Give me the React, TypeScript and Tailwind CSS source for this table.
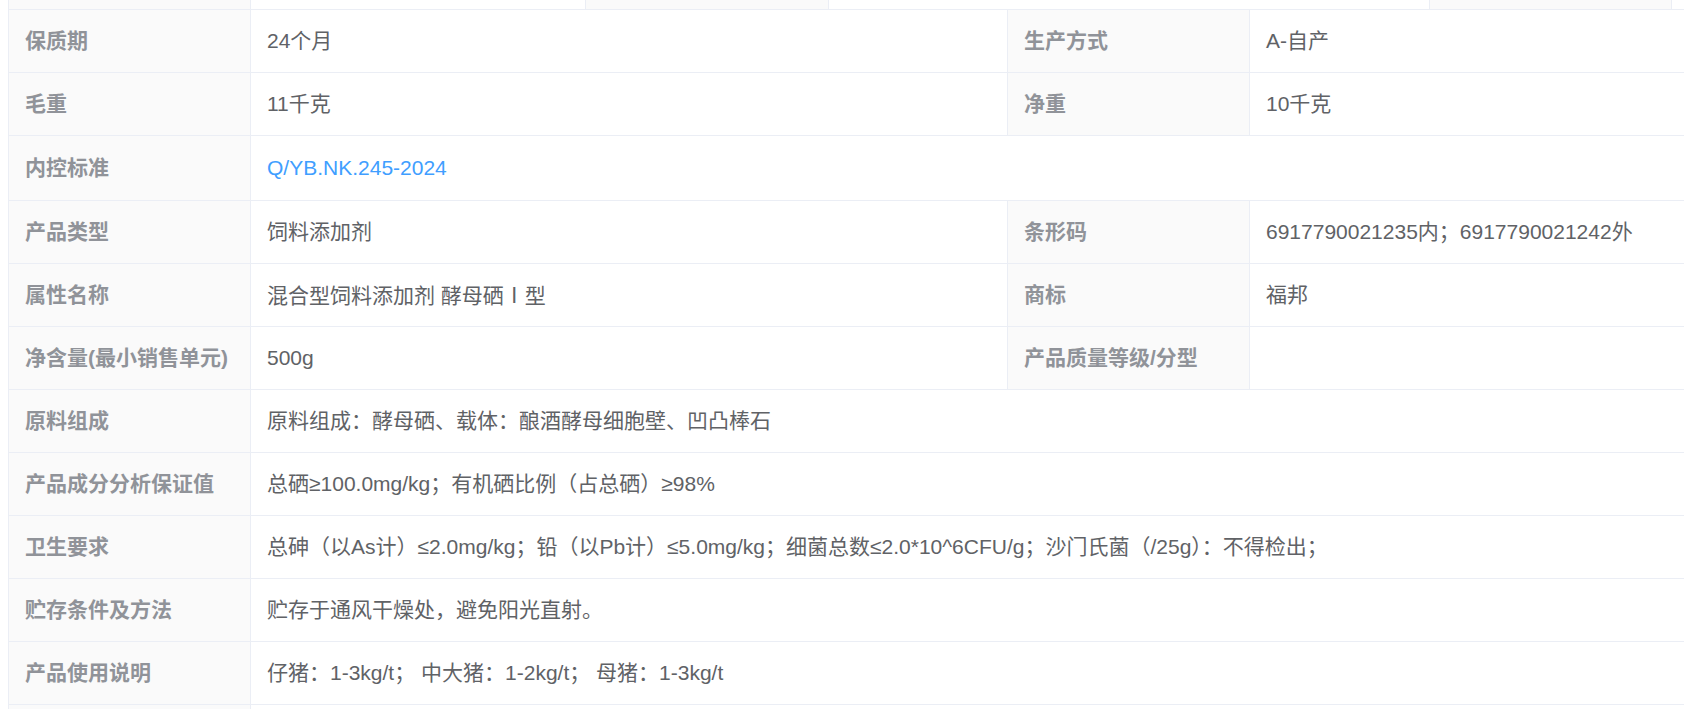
type Row = {
    label: string;
    value: React.ReactNode;
    label2?: string;
    value2?: React.ReactNode;
    tall?: boolean;
};

const rows: Row[] = [
    { label: "保质期", value: "24个月", label2: "生产方式", value2: "A-自产" },
    { label: "毛重", value: "11千克", label2: "净重", value2: "10千克" },
    {
        label: "内控标准",
        value: <span className="text-[#409eff]">Q/YB.NK.245-2024</span>,
        tall: true,
    },
    {
        label: "产品类型",
        value: "饲料添加剂",
        label2: "条形码",
        value2: "6917790021235内；6917790021242外",
    },
    {
        label: "属性名称",
        value: (
            <>
                混合型饲料添加剂 酵母硒
                <span style={{ fontFamily: '"Noto Sans CJK SC", sans-serif' }}>Ⅰ</span>型
            </>
        ),
        label2: "商标",
        value2: "福邦",
    },
    { label: "净含量(最小销售单元)", value: "500g", label2: "产品质量等级/分型", value2: "" },
    { label: "原料组成", value: "原料组成：酵母硒、载体：酿酒酵母细胞壁、凹凸棒石" },
    { label: "产品成分分析保证值", value: "总硒≥100.0mg/kg；有机硒比例（占总硒）≥98%" },
    {
        label: "卫生要求",
        value: "总砷（以As计）≤2.0mg/kg；铅（以Pb计）≤5.0mg/kg；细菌总数≤2.0*10^6CFU/g；沙门氏菌（/25g）：不得检出；",
    },
    { label: "贮存条件及方法", value: "贮存于通风干燥处，避免阳光直射。" },
    { label: "产品使用说明", value: "仔猪：1-3kg/t； 中大猪：1-2kg/t； 母猪：1-3kg/t" },
    { label: "", value: "" },
];

const labelCls =
    "border border-[#ebeef5] bg-[#fafafa] px-4 text-left align-middle font-bold text-[#909399]";
const valueCls = "border border-[#ebeef5] bg-white px-4 text-left align-middle text-[#606266]";

export default function App() {
    return (
        <div
            className="h-[709px] w-[1684px] overflow-hidden bg-white pl-2 text-[21px]"
            style={{ fontFamily: '"Liberation Sans", "Noto Sans CJK SC", sans-serif' }}
        >
            {/* tail of the table above */}
            <div className="flex h-[10px] w-[2000px] border-b border-l border-[#ebeef5]">
                <div className="w-[242px] border-r border-[#ebeef5] bg-[#fafafa]" />
                <div className="w-[335px] border-r border-[#ebeef5]" />
                <div className="w-[243px] border-r border-[#ebeef5] bg-[#fafafa]" />
                <div className="w-[601px] border-r border-[#ebeef5]" />
                <div className="w-[242px] border-r border-[#ebeef5] bg-[#fafafa]" />
                <div className="flex-1" />
            </div>

            <table className="-mt-px w-[1998px] table-fixed border-collapse">
                <colgroup>
                    <col className="w-[242px]" />
                    <col className="w-[757px]" />
                    <col className="w-[242px]" />
                    <col className="w-[757px]" />
                </colgroup>
                <tbody>
                    {rows.map((row, i) => (
                        <tr key={i} className={row.tall ? "h-[65px]" : "h-[63px]"}>
                            <th className={labelCls}>{row.label}</th>
                            {row.label2 !== undefined ? (
                                <>
                                    <td className={valueCls}>{row.value}</td>
                                    <th className={labelCls}>{row.label2}</th>
                                    <td className={valueCls}>{row.value2}</td>
                                </>
                            ) : (
                                <td className={valueCls} colSpan={3}>
                                    {row.value}
                                </td>
                            )}
                        </tr>
                    ))}
                </tbody>
            </table>
        </div>
    );
}
